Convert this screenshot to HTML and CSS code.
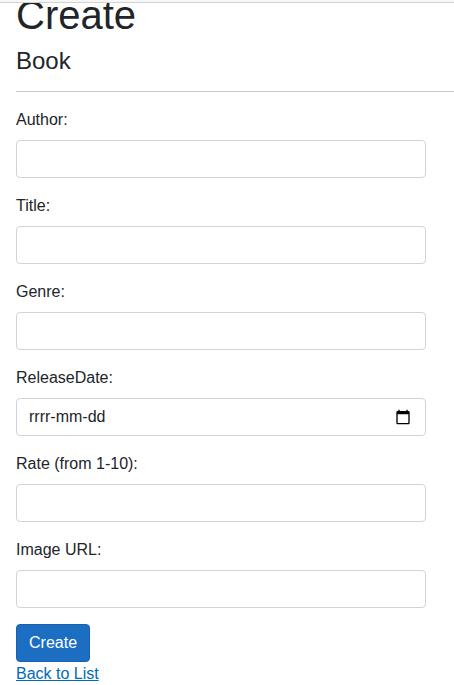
FILE: index.html
```html
<!DOCTYPE html>
<html lang="en">
<head>
<meta charset="utf-8">
<title>Create</title>
<link rel="stylesheet" href="styles.css">
</head>
<body>
<div class="topbar"></div>
<main class="page">
<h1>Create</h1>
<h4>Book</h4>
<hr>
<form class="form">
<div class="group"><label for="author">Author:</label><input class="control" id="author"></div>
<div class="group"><label for="title">Title:</label><input class="control" id="title"></div>
<div class="group"><label for="genre">Genre:</label><input class="control" id="genre"></div>
<div class="group"><label for="date">ReleaseDate:</label>
<div class="control date" id="date"><span>rrrr-mm-dd</span>
<svg class="calendar" viewBox="0 0 24 24"><path d="M20 3h-1V1h-2v2H7V1H5v2H4c-1.100 0-2 .9-2 2v16c0 1.100.9 2 2 2h16c1.100 0 2-.9 2-2V5c0-1.100-.9-2-2-2zm0 18H4V8h16v13z"/></svg></div></div>
<div class="group"><label for="rate">Rate (from 1-10):</label><input class="control" id="rate"></div>
<div class="group"><label for="image">Image URL:</label><input class="control" id="image"></div>
<button class="button" type="button">Create</button>
</form>
<a class="back" href="#">Back to List</a>
</main>
</body>
</html>
```

FILE: styles.css
```css
* { box-sizing: border-box; }
html, body { height: 100%; }
body {
  display: flex;
  flex-direction: column;
  margin: 0;
  overflow: hidden;
  background: #fff;
  color: #212529;
  font: 16px/24px "Liberation Sans", Arial, sans-serif;
}
.topbar {
  flex: none;
  height: 3px;
  background: #f7f7f7;
  border-bottom: 1px solid #d2d2d2;
}
.page {
  flex: 1;
  min-height: 0;
  padding-left: 16px;
  overflow: hidden;
}
h1 { margin: -12px 0 8px; font-size: 40px; line-height: 48px; font-weight: 400; }
h4 { margin: 0 0 8px; font-size: 24px; line-height: 28px; font-weight: 400; }
hr { margin: 16px 0; border: 0; border-top: 1px solid #c8c9ca; }
.form { width: 410px; }
.group { margin-bottom: 16px; }
label { display: block; margin-bottom: 8px; }
.control {
  display: block;
  width: 100%;
  height: 38px;
  padding: 6px 12px;
  border: 1px solid #ced4da;
  border-radius: 4px;
  background: #fff;
  color: #212529;
  font: inherit;
}
.date { display: flex; align-items: center; justify-content: space-between; }
.calendar { width: 16px; height: 16px; margin-right: 2px; fill: #000; }
.button {
  display: block;
  height: 38px;
  padding: 6px 12px;
  border: 1px solid #1861ac;
  border-radius: 4px;
  background: #1b6ec2;
  color: #fff;
  font: inherit;
}
.back { display: block; color: #006bb7; }
```
